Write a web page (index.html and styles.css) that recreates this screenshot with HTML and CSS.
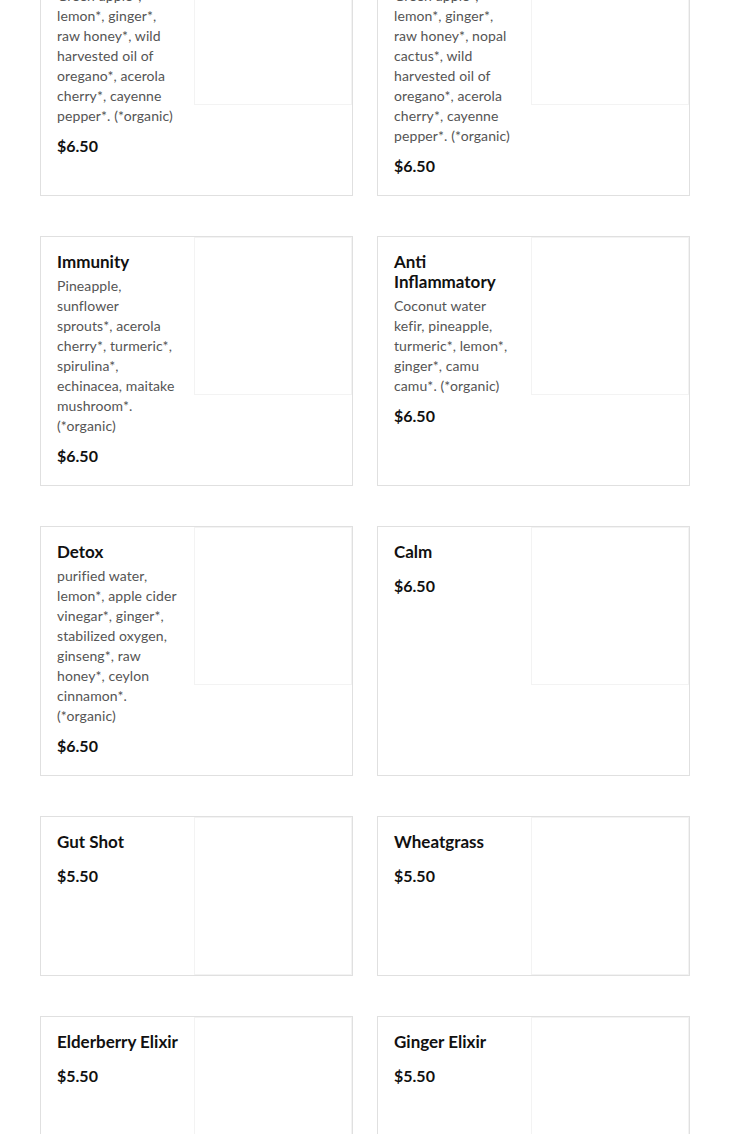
FILE: index.html
```html
<!DOCTYPE html>
<html>
<head>
<meta charset="utf-8">
<link rel="stylesheet" href="styles.css">
</head>
<body>
<main class="menu">
  <article class="card">
    <div class="info">
      <h3 class="name">Fire Shot</h3>
      <p class="desc">Green apple*, lemon*, ginger*, raw honey*, wild harvested oil of oregano*, acerola cherry*, cayenne pepper*. (*organic)</p>
      <p class="price">$6.50</p>
    </div>
    <div class="pic"><div class="ph"></div></div>
  </article>
  <article class="card">
    <div class="info">
      <h3 class="name">Cactus Fire</h3>
      <p class="desc">Green apple*, lemon*, ginger*, raw honey*, nopal cactus*, wild harvested oil of oregano*, acerola cherry*, cayenne pepper*. (*organic)</p>
      <p class="price">$6.50</p>
    </div>
    <div class="pic"><div class="ph"></div></div>
  </article>
  <article class="card">
    <div class="info">
      <h3 class="name">Immunity</h3>
      <p class="desc">Pineapple, sunflower sprouts*, acerola cherry*, turmeric*, spirulina*, echinacea, maitake mushroom*. (*organic)</p>
      <p class="price">$6.50</p>
    </div>
    <div class="pic"><div class="ph"></div></div>
  </article>
  <article class="card">
    <div class="info">
      <h3 class="name">Anti Inflammatory</h3>
      <p class="desc">Coconut water kefir, pineapple, turmeric*, lemon*, ginger*, camu camu*. (*organic)</p>
      <p class="price">$6.50</p>
    </div>
    <div class="pic"><div class="ph"></div></div>
  </article>
  <article class="card">
    <div class="info">
      <h3 class="name">Detox</h3>
      <p class="desc">purified water, lemon*, apple cider vinegar*, ginger*, stabilized oxygen, ginseng*, raw honey*, ceylon cinnamon*. (*organic)</p>
      <p class="price">$6.50</p>
    </div>
    <div class="pic"><div class="ph"></div></div>
  </article>
  <article class="card">
    <div class="info">
      <h3 class="name">Calm</h3>
      <p class="price">$6.50</p>
    </div>
    <div class="pic"><div class="ph"></div></div>
  </article>
  <article class="card">
    <div class="info">
      <h3 class="name">Gut Shot</h3>
      <p class="price">$5.50</p>
    </div>
    <div class="pic"><div class="ph"></div></div>
  </article>
  <article class="card">
    <div class="info">
      <h3 class="name">Wheatgrass</h3>
      <p class="price">$5.50</p>
    </div>
    <div class="pic"><div class="ph"></div></div>
  </article>
  <article class="card">
    <div class="info">
      <h3 class="name">Elderberry Elixir</h3>
      <p class="price">$5.50</p>
    </div>
    <div class="pic"><div class="ph"></div></div>
  </article>
  <article class="card">
    <div class="info">
      <h3 class="name">Ginger Elixir</h3>
      <p class="price">$5.50</p>
    </div>
    <div class="pic"><div class="ph"></div></div>
  </article>
</main>
</body>
</html>
```

FILE: styles.css
```css
html, body {
  margin: 0;
  padding: 0;
  background: #fff;
}
body {
  font-family: Lato, "Liberation Sans", sans-serif;
  color: #111;
}
.menu {
  display: grid;
  grid-template-columns: 1fr 1fr;
  column-gap: 24px;
  row-gap: 40px;
  padding: 0 40px 40px;
  margin-top: -54px;
}
.card {
  display: grid;
  grid-template-columns: 153px 1fr;
  border: 1px solid #e0e0e0;
  background: #fff;
  align-items: start;
}
.info {
  padding: 15px 17px 19px 16px;
}
.name {
  margin: 0 -8px 4px 0;
  font-size: 17px;
  line-height: 20px;
  font-weight: 700;
  color: #111;
}
.desc {
  margin: 0;
  font-size: 14px;
  line-height: 20px;
  letter-spacing: 0.1px;
  color: #555;
}
.price {
  margin: 10px 0 0;
  font-size: 16px;
  line-height: 20px;
  font-weight: 700;
  color: #111;
}
.name + .price {
  margin-top: 14px;
}
.pic {
  height: 100%;
}
.ph {
  aspect-ratio: 1 / 1;
  border: 1px solid #f3f3f3;
}
```
